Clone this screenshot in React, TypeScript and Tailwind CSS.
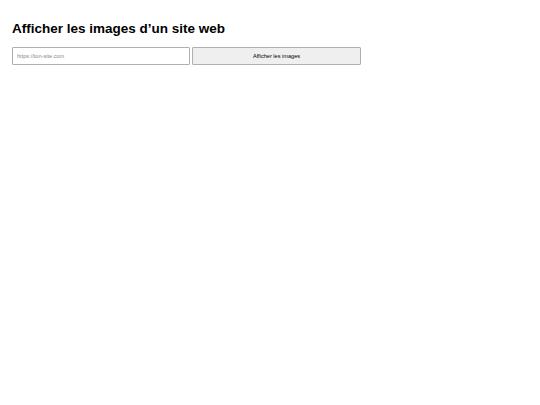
export default function App() {
  return (
    <div className="min-h-[405px] w-[540px] bg-white px-[12px] pt-[21px]" style={{ fontFamily: '"Liberation Sans", Arial, sans-serif' }}>
      <h1 className="text-[13.5px] font-bold leading-[16px] text-black">Afficher les images d’un site web</h1>
      <div className="mt-[10px] flex gap-[2px]">
        <input
          className="h-[18px] w-[178px] rounded-[1px] border border-[#b0b0b0] px-[4px] text-[5.6px] text-black placeholder:text-[#8a8a8a] outline-none"
          placeholder="https://ton-site.com"
        />
        <button className="h-[18px] w-[169px] rounded-[1px] border border-[#b0b0b0] bg-[#efefef] text-[5.6px] text-black">
          Afficher les images
        </button>
      </div>
    </div>
  );
}
